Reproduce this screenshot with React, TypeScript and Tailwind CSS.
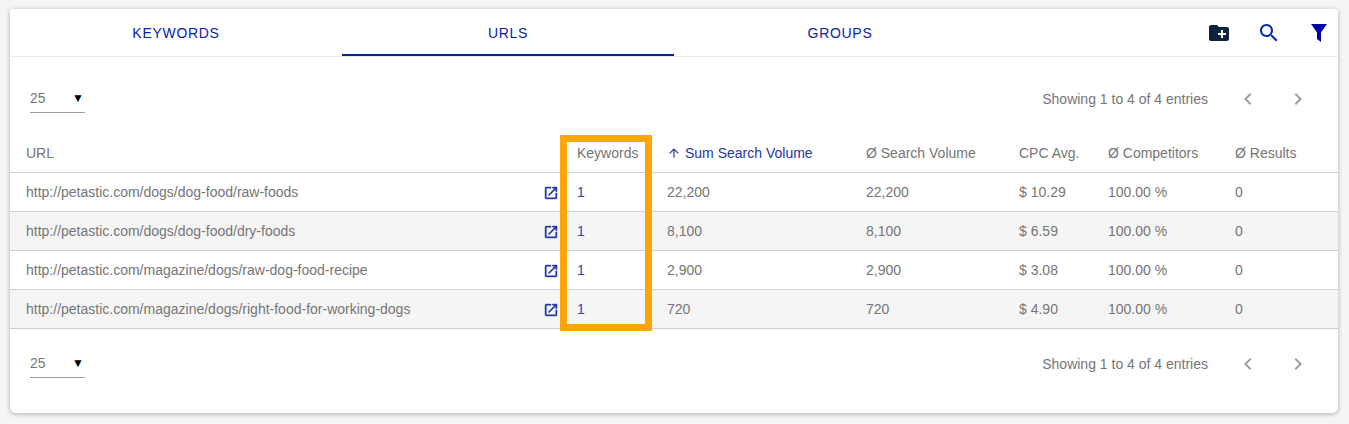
const URLS = [
  ["http://petastic.com/dogs/dog-food/raw-foods", "22,200", "$ 10.29"],
  ["http://petastic.com/dogs/dog-food/dry-foods", "8,100", "$ 6.59"],
  ["http://petastic.com/magazine/dogs/raw-dog-food-recipe", "2,900", "$ 3.08"],
  ["http://petastic.com/magazine/dogs/right-food-for-working-dogs", "720", "$ 4.90"],
];

function Icon({ d, className }: { d: string; className: string }) {
  return (
    <svg viewBox="0 0 24 24" fill="currentColor" className={className}>
      <path d={d} />
    </svg>
  );
}

const CHEVRON_L = "M15.41 7.41L14 6l-6 6 6 6 1.41-1.41L10.83 12z";
const CHEVRON_R = "M10 6L8.59 7.41 13.17 12l-4.58 4.59L10 18l6-6z";

function Controls({ className }: { className: string }) {
  return (
    <div className={`flex justify-between ${className}`}>
      <div className="ml-[20px] flex h-[28px] w-[55px] items-center justify-between border-b border-[#9e9e9e] pb-[1px] pr-[1px] text-[#757575]">
        <span>25</span>
        <span className="text-[12px] leading-none text-black">▼</span>
      </div>
      <div className="flex h-[28px] items-center text-[#757575]">
        <span className="mr-[28px]">Showing 1 to 4 of 4 entries</span>
        <Icon d={CHEVRON_L} className="mr-[26px] h-6 w-6 text-[#9e9e9e]" />
        <Icon d={CHEVRON_R} className="mr-[28px] h-6 w-6 text-[#9e9e9e]" />
      </div>
    </div>
  );
}

export default function App() {
  const th = "h-[39px] border-b border-[#cfcfcf] pl-4 text-left font-normal";
  const td = "h-[39px] border-b border-[#cfcfcf] pl-4";
  return (
    <div className="h-[424px] bg-[#f5f5f5] pl-[10px] pt-[9px] font-['Liberation_Sans',Arial,sans-serif] text-[14px] text-[#757575]">
      <div className="relative h-[404px] w-[1328px] rounded-b-[6px] rounded-t-[3px] bg-white shadow-[0_1px_5px_rgba(0,0,0,0.3)]">
        <div className="flex h-[48px] border-b border-[#ebebeb]">
          <div className="flex h-[47px] w-[332px] items-center justify-center pt-[1px] tracking-[0.7px] text-[#0a22a8]">KEYWORDS</div>
          <div className="flex h-[47px] w-[332px] items-center justify-center border-b-2 border-[#0a1fa0] pt-[3px] tracking-[0.7px] text-[#0a22a8]">URLS</div>
          <div className="flex h-[47px] w-[332px] items-center justify-center pt-[1px] tracking-[0.7px] text-[#0a22a8]">GROUPS</div>
          <div className="flex h-[47px] flex-1 items-center pl-[201px]">
            <Icon
              d="M20 6h-8l-2-2H4c-1.11 0-1.99.89-1.99 2L2 18c0 1.11.89 2 2 2h16c1.11 0 2-.89 2-2V8c0-1.11-.89-2-2-2zm-1 8h-3v3h-2v-3h-3v-2h3V9h2v3h3v2z"
              className="mr-[26px] h-6 w-6 shrink-0 text-[#0d2240]"
            />
            <Icon
              d="M15.5 14h-.79l-.28-.27C15.41 12.59 16 11.11 16 9.5 16 5.91 13.09 3 9.5 3S3 5.91 3 9.5 5.91 16 9.5 16c1.61 0 3.09-.59 4.23-1.57l.27.28v.79l5 4.99L20.49 19l-4.99-5zm-6 0C7.01 14 5 11.99 5 9.5S7.01 5 9.5 5 14 7.01 14 9.5 11.99 14 9.5 14z"
              className="mr-[26px] h-6 w-6 shrink-0 text-[#0a2aa8]"
            />
            <Icon d="M4 3h16l-6 8.5V21l-4-3v-6.5z" className="h-6 w-6 shrink-0 text-[#0000a8]" />
          </div>
        </div>

        <Controls className="h-[77px] pt-[28px]" />

        <table className="w-full table-fixed border-separate border-spacing-0">
          <colgroup>
            <col className="w-[551px]" />
            <col className="w-[90px]" />
            <col className="w-[199px]" />
            <col className="w-[153px]" />
            <col className="w-[89px]" />
            <col className="w-[127px]" />
            <col />
          </colgroup>
          <thead>
            <tr>
              <th className={th}>URL</th>
              <th className={th}>Keywords</th>
              <th className={`${th} text-[#1f35a8]`}>
                <span className="flex items-center gap-[4px]">
                  <Icon d="M4 12l1.41 1.41L11 7.83V20h2V7.83l5.58 5.59L20 12l-8-8-8 8z" className="h-[14px] w-[14px]" />
                  Sum Search Volume
                </span>
              </th>
              <th className={th}>Ø Search Volume</th>
              <th className={th}>CPC Avg.</th>
              <th className={th}>Ø Competitors</th>
              <th className={th}>Ø Results</th>
            </tr>
          </thead>
          <tbody>
            {URLS.map(([url, vol, cpc], i) => (
              <tr key={url} className={i % 2 === 1 ? "bg-[#f5f5f5]" : ""}>
                <td className={`${td} pr-[2px]`}>
                  <div className="flex items-center justify-between">
                    <span>{url}</span>
                    <Icon
                      d="M19 19H5V5h7V3H5c-1.11 0-2 .9-2 2v14c0 1.1.89 2 2 2h14c1.1 0 2-.9 2-2v-7h-2v7zM14 3v2h3.59l-9.83 9.83 1.41 1.41L19 6.41V10h2V3h-7z"
                      className="mt-[2px] h-4 w-4 stroke-current stroke-[0.6px] text-[#1f35a8]"
                    />
                  </div>
                </td>
                <td className={`${td} text-[#2f45b0]`}>1</td>
                <td className={td}>{vol}</td>
                <td className={td}>{vol}</td>
                <td className={td}>{cpc}</td>
                <td className={td}>100.00 %</td>
                <td className={td}>0</td>
              </tr>
            ))}
          </tbody>
        </table>

        <Controls className="pt-[21px]" />

        <div className="absolute left-[550px] top-[126px] h-[196px] w-[92px] border-[7px] border-[#ffa50a]" />
      </div>
    </div>
  );
}
